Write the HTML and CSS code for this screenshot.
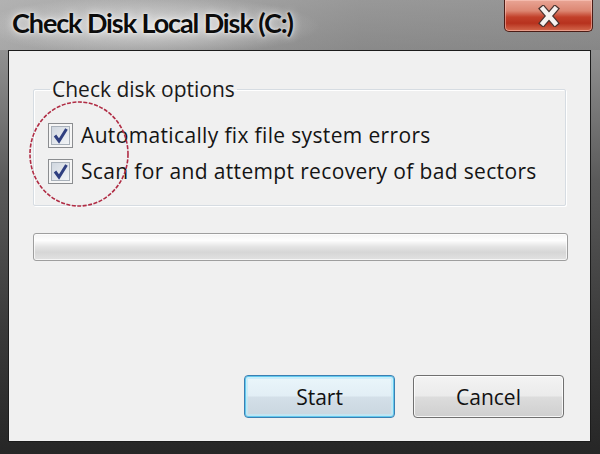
FILE: index.html
```html
<!DOCTYPE html>
<html lang="en">
<head>
  <meta charset="UTF-8">
  <title>Check Disk Local Disk (C:)</title>
  <link rel="stylesheet" href="styles.css">
</head>
<body>

  <div class="window">
    <div class="titlebar">
      <h1 class="title">Check Disk Local Disk (C:)</h1>
      <button class="close" type="button" aria-label="Close">
        <svg width="30" height="22" viewBox="0 0 30 22">
          <path d="M9 4 L21 18 M21 4 L9 18" stroke="#4a3430" stroke-width="7" stroke-linecap="square"/>
          <path d="M9 4 L21 18 M21 4 L9 18" stroke="#f6f2f0" stroke-width="4.5" stroke-linecap="square"/>
        </svg>
      </button>
    </div>

    <div class="client">
      <fieldset class="group">
        <legend>Check disk options</legend>

        <label class="option">
          <span class="checkbox">
            <svg width="25" height="25" viewBox="0 0 25 25">
              <defs>
                <linearGradient id="cbFill" x1="0" y1="0" x2="1" y2="1">
                  <stop offset="0" stop-color="#cfd6df"/>
                  <stop offset="1" stop-color="#f3f5f7"/>
                </linearGradient>
              </defs>
              <rect x="0.5" y="0.5" width="24" height="24" fill="#f6f6f6" stroke="#8b8d90"/>
              <rect x="3.5" y="3.5" width="18" height="18" fill="url(#cbFill)" stroke="#a9b1ba"/>
              <path d="M7 12.5 L11 18 L18.5 6" fill="none" stroke="#2f3f80" stroke-width="3"/>
            </svg>
          </span>
          Automatically fix file system errors
        </label>

        <label class="option">
          <span class="checkbox">
            <svg width="25" height="25" viewBox="0 0 25 25">
              <rect x="0.5" y="0.5" width="24" height="24" fill="#f6f6f6" stroke="#8b8d90"/>
              <rect x="3.5" y="3.5" width="18" height="18" fill="url(#cbFill)" stroke="#a9b1ba"/>
              <path d="M7 12.5 L11 18 L18.5 6" fill="none" stroke="#2f3f80" stroke-width="3"/>
            </svg>
          </span>
          Scan for and attempt recovery of bad sectors
        </label>
      </fieldset>

      <div class="progress"></div>

      <div class="actions">
        <button class="btn btn-default" type="button">Start</button>
        <button class="btn" type="button">Cancel</button>
      </div>
    </div>

    <!-- hand-drawn annotation round the checkboxes -->
    <svg class="markup" width="600" height="454" viewBox="0 0 600 454">
      <ellipse cx="79" cy="154" rx="49" ry="52" fill="none" stroke="#b02c44" stroke-width="1.6" stroke-dasharray="4 1.5"/>
    </svg>
  </div>

</body>
</html>
```

FILE: styles.css
```css
* {
  margin: 0;
  padding: 0;
  box-sizing: border-box;
}

body {
  background: #2b2b2b;
  font-family: "Open Sans", "Noto Sans", sans-serif;
}

.window {
  position: relative;
  width: 600px;
  height: 454px;
  display: flex;
  flex-direction: column;
  background: linear-gradient(to bottom, #a6a6a6 0, #8f8f8f 55px, #5a5a5a 180px, #3a3a3a 330px, #262626 454px);
  overflow: hidden;
}

.titlebar {
  height: 50px;
  display: flex;
  justify-content: space-between;
  align-items: flex-start;
  padding: 0 7px 0 12px;
  background:
    radial-gradient(ellipse 170px 30px at 150px 26px, rgba(235, 235, 235, 0.75), rgba(235, 235, 235, 0) 100%),
    linear-gradient(to right, rgba(190, 190, 190, 0.5), rgba(120, 120, 120, 0.3) 60%, rgba(110, 110, 110, 0.3));
}

.title {
  margin-top: 6px;
  font-family: "Lato", "Open Sans", sans-serif;
  font-size: 27px;
  font-weight: 700;
  color: #0c0c0c;
  letter-spacing: -1.1px;
  text-shadow: 0 0 8px rgba(255, 255, 255, 0.9), 0 0 3px rgba(255, 255, 255, 0.8);
}

.close {
  width: 89px;
  height: 32px;
  display: flex;
  justify-content: center;
  align-items: center;
  border: 1px solid #4a1c16;
  border-top: none;
  border-radius: 0 0 5px 5px;
  background: linear-gradient(to bottom, #e9a595 0, #dc8672 35%, #c2402a 55%, #b7321e 75%, #d46a4e 100%);
  box-shadow: inset 0 0 0 1px rgba(255, 210, 200, 0.5);
}

.client {
  flex: 1;
  margin: 0 9px 12px 8px;
  border: 1px solid #1c1c1c;
  background: #f0f0f0;
  display: flex;
  flex-direction: column;
  padding: 26px 0 0 0;
}

.group {
  margin: 0 24px 0 24px;
  border: 1px solid #d6dce2;
  box-shadow: 1px 1px 0 #ffffff, inset 1px 1px 0 #ffffff;
  padding: 16px 0 16px 14px;
  border-radius: 2px;
}

.group legend {
  margin-left: 2px;
  padding: 0 2px;
  font-size: 21px;
  line-height: 24px;
  color: #1a1a1a;
}

.option {
  display: flex;
  align-items: center;
  gap: 8px;
  height: 36px;
  font-size: 21px;
  letter-spacing: 0.35px;
  color: #141414;
}

.checkbox {
  width: 25px;
  height: 25px;
  display: block;
}

.checkbox svg {
  display: block;
}

.progress {
  margin: 27px 22px 0 24px;
  height: 28px;
  border: 1px solid #9e9e9e;
  border-radius: 3px;
  background: linear-gradient(to bottom, #f4f4f4 0, #fdfdfd 25%, #e3e3e3 50%, #d6d6d6 70%, #e2e2e2 100%);
  box-shadow: inset 0 0 0 1px rgba(255, 255, 255, 0.7);
}

.actions {
  margin-top: auto;
  margin-bottom: 23px;
  padding-right: 26px;
  display: flex;
  justify-content: flex-end;
  gap: 18px;
}

.btn {
  width: 151px;
  height: 43px;
  font-family: "Open Sans", "Noto Sans", sans-serif;
  font-size: 21px;
  color: #111;
  border: 1px solid #707070;
  border-radius: 4px;
  background: linear-gradient(to bottom, #f3f3f3 0, #ebebeb 48%, #dcdcdc 52%, #cfcfcf 100%);
  box-shadow: inset 0 0 0 1px rgba(255, 255, 255, 0.8);
}

.btn-default {
  border-color: #3c7fb1;
  box-shadow: inset 0 0 0 1px #62c9ef, inset 0 0 0 3px rgba(190, 235, 250, 0.7);
  background: linear-gradient(to bottom, #eaf6fb 0, #e2eef5 48%, #d3dfe8 52%, #c9d6df 100%);
}

.markup {
  position: absolute;
  left: 0;
  top: 0;
  pointer-events: none;
}
```
